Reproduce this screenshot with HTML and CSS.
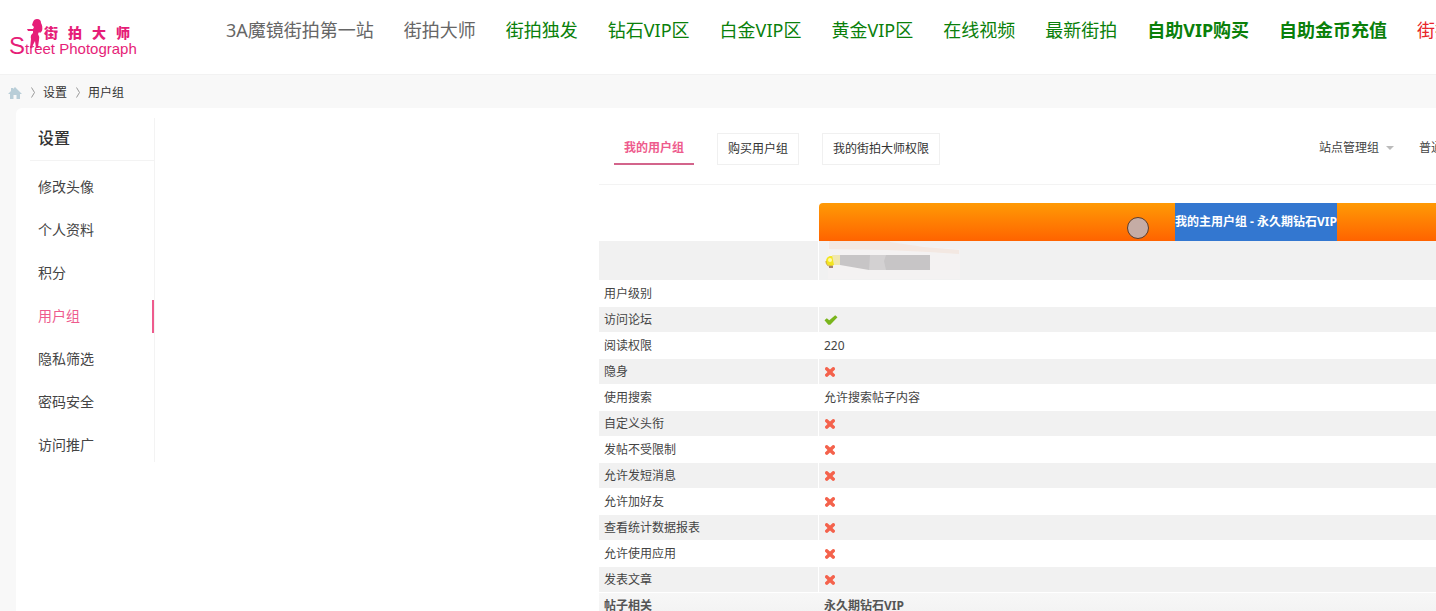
FILE: index.html
```html
<!DOCTYPE html>
<html lang="zh-CN">
<head>
<meta charset="utf-8">
<title>用户组 - 街拍大师</title>
<link rel="stylesheet" href="styles.css">
</head>
<body>
<svg class="defs" aria-hidden="true">
  <symbol id="cross" viewBox="0 0 12 12"><path d="M1 2.500Q1.500.8 3.500 1.200L6 3.500 8.500 1.200Q10.500.8 11 2.500V3.500L8.500 6 11 8.500V9.500Q10.500 11.200 8.500 10.800L6 8.500 3.500 10.800Q1.500 11.200 1 9.500V8.500L3.500 6 1 3.500Z" fill="#f4624c"/></symbol>
  <symbol id="check" viewBox="0 0 14 12"><path d="M.5 6.300 2.800 4.200 5.300 6.300 11.200 1.200 13.500 3.200 6.300 10.800 4.300 10.800Z" fill="#7ab51d"/></symbol>
</svg>
<header class="header">
  <a class="logo" href="#" aria-label="街拍大师 Street Photograph">
    <svg class="figure" viewBox="0 0 18 30" aria-hidden="true"><path d="M6 3Q7 0 10 0 14 0 14 4 16 7 15 12L13 14 12 13 11 15Q13 18 12 21L11 28 13 29 9 29 8 22 6 26 5 29 3 29 4 20Q3 16 6 14L6 12 1 12 0 10 6 10 7 8 5 6Z" fill="#e61e78"/></svg>
    <span class="logo-cn">街拍大师</span>
    <span class="logo-en"><span class="logo-s">S</span>treet Photograph</span>
  </a>
  <nav class="nav">
    <a href="#">3A魔镜街拍第一站</a>
    <a href="#">街拍大师</a>
    <a class="green" href="#">街拍独发</a>
    <a class="green" href="#">钻石VIP区</a>
    <a class="green" href="#">白金VIP区</a>
    <a class="green" href="#">黄金VIP区</a>
    <a class="green" href="#">在线视频</a>
    <a class="green" href="#">最新街拍</a>
    <a class="green strong" href="#">自助VIP购买</a>
    <a class="green strong" href="#">自助金币充值</a>
    <a class="red" href="#">街拍</a>
  </nav>
</header>
<nav class="crumbs" aria-label="面包屑">
  <a href="#" aria-label="首页"><svg class="home" viewBox="0 0 14 14"><path d="M7 1 14 8 12 8 12 13 8.500 13 8.500 9 5.500 9 5.500 13 2 13 2 8 0 8 3 5 3 2 5 2 5 3Z" fill="#b9ced8"/></svg></a>
  <svg class="arrow" viewBox="0 0 4 11"><path d="M.5.5 3.500 5.500.5 10.500" fill="none" stroke="#999"/></svg>
  <a href="#">设置</a>
  <svg class="arrow" viewBox="0 0 4 11"><path d="M.5.5 3.500 5.500.5 10.500" fill="none" stroke="#999"/></svg>
  <a href="#">用户组</a>
</nav>
<div class="panel">
  <aside class="side">
    <h2>设置</h2>
    <ul>
      <li><a href="#">修改头像</a></li>
      <li><a href="#">个人资料</a></li>
      <li><a href="#">积分</a></li>
      <li><a class="current" href="#">用户组</a></li>
      <li><a href="#">隐私筛选</a></li>
      <li><a href="#">密码安全</a></li>
      <li><a href="#">访问推广</a></li>
    </ul>
  </aside>
  <main class="main">
    <div class="tabs">
      <a class="tab active" href="#">我的用户组</a>
      <a class="tab" href="#">购买用户组</a>
      <a class="tab" href="#">我的街拍大师权限</a>
      <div class="groups">
        <button type="button">站点管理组<svg class="caret" viewBox="0 0 8 4"><path d="M0 0H8L4 4Z" fill="#bbb"/></svg></button>
        <button type="button">普通用户组</button>
      </div>
    </div>
    <table class="perms">
      <colgroup><col class="name"><col></colgroup>
      <thead>
        <tr><td></td><th scope="col"><div class="banner"><span class="marked">我的主用户组 - 永久期钻石VIP</span><i class="pointer"></i></div></th></tr>
      </thead>
      <tbody>
        <tr class="alt member"><td></td><td><svg class="masked" viewBox="0 0 144 42" aria-hidden="true">
          <path d="M9 0H71V5L141 10V40H9Z" fill="#f4f2f2"/>
          <path d="M10 0H71V3L105 8 140 11V15L110 13 68 11 10 10Z" fill="#f3e8e2"/>
          <circle cx="12" cy="22" r="5" fill="#f3e51e"/><path d="M7 22Q7 27 11 27H14" fill="none" stroke="#cda72a"/><path d="M10 27H14V29H10Z" fill="#a38470"/><circle cx="11" cy="21" r="2" fill="#fff9a5"/>
          <path d="M13 16H21V26H15Z" fill="#f0e7b1"/>
          <path d="M21 16H111V31H50L21 26Z" fill="#c7c5c6"/><path d="M51 16H67L65 22 67 31H50Z" fill="#d3d1d2"/>
        </svg></td></tr>
        <tr><th scope="row">用户级别</th><td></td></tr>
        <tr class="alt"><th scope="row">访问论坛</th><td><svg class="check" role="img" aria-label="是"><use href="#check"/></svg></td></tr>
        <tr><th scope="row">阅读权限</th><td>220</td></tr>
        <tr class="alt"><th scope="row">隐身</th><td><svg class="cross" role="img" aria-label="否"><use href="#cross"/></svg></td></tr>
        <tr><th scope="row">使用搜索</th><td>允许搜索帖子内容</td></tr>
        <tr class="alt"><th scope="row">自定义头衔</th><td><svg class="cross" role="img" aria-label="否"><use href="#cross"/></svg></td></tr>
        <tr><th scope="row">发帖不受限制</th><td><svg class="cross" role="img" aria-label="否"><use href="#cross"/></svg></td></tr>
        <tr class="alt"><th scope="row">允许发短消息</th><td><svg class="cross" role="img" aria-label="否"><use href="#cross"/></svg></td></tr>
        <tr><th scope="row">允许加好友</th><td><svg class="cross" role="img" aria-label="否"><use href="#cross"/></svg></td></tr>
        <tr class="alt"><th scope="row">查看统计数据报表</th><td><svg class="cross" role="img" aria-label="否"><use href="#cross"/></svg></td></tr>
        <tr><th scope="row">允许使用应用</th><td><svg class="cross" role="img" aria-label="否"><use href="#cross"/></svg></td></tr>
        <tr class="alt"><th scope="row">发表文章</th><td><svg class="cross" role="img" aria-label="否"><use href="#cross"/></svg></td></tr>
        <tr class="section"><th scope="row">帖子相关</th><td>永久期钻石VIP</td></tr>
      </tbody>
    </table>
  </main>
</div>
</body>
</html>
```
FILE: styles.css
```css
* { box-sizing: border-box; }
html { overflow: hidden; }
body {
  margin: 0;
  overflow: hidden;
  height: 100vh;
  background: #f8f8f8;
  color: #444;
  font: 12px/20px "Noto Sans", "Noto Sans CJK SC", sans-serif;
}
a { color: inherit; text-decoration: none; }
.defs { display: none; }

.header {
  display: flex;
  align-items: flex-start;
  height: 75px;
  background: #fff;
  border-bottom: 1px solid #f2f2f2;
}
.logo {
  position: relative;
  flex: none;
  width: 226px;
  padding: 24px 0 0 9px;
  color: #e61e78;
  font-family: "Liberation Sans", "Noto Sans CJK SC", sans-serif;
}
.figure { position: absolute; left: 27px; top: 19px; width: 18px; height: 30px; }
.logo-cn {
  display: block;
  padding-left: 35px;
  font-size: 14px;
  line-height: 18px;
  font-weight: 900;
  letter-spacing: 10px;
}
.logo-en { display: block; font-size: 15px; line-height: 8px; white-space: nowrap; }
.logo-s { font-size: 24px; }
.nav {
  display: flex;
  gap: 30px;
  padding-top: 15px;
  font-size: 18px;
  line-height: 30px;
  white-space: nowrap;
  color: #666;
}
.green { color: #0a800a; }
.strong { font-weight: 700; }
.red { color: #e8262a; }

.crumbs {
  display: flex;
  align-items: center;
  height: 33px;
  padding: 2px 8px 0;
  color: #333;
}
.home { display: block; width: 14px; height: 14px; }
.arrow { width: 4px; height: 11px; margin: 0 8px 0 9px; }

.panel {
  display: flex;
  align-items: flex-start;
  margin-left: 16px;
  padding: 10px 0 0 14px;
  min-height: 100vh;
  background: #fff;
  border-radius: 6px 0 0 0;
}
.side {
  flex: none;
  width: 125px;
  border-right: 1px solid #f3f3f3;
  font-size: 14px;
}
.side h2 {
  margin: 0;
  padding: 0 8px;
  height: 43px;
  border-bottom: 1px solid #f3f3f3;
  font-size: 16px;
  line-height: 40px;
  font-weight: 500;
  color: #333;
}
.side ul { list-style: none; margin: 0; padding: 10px 0 0; }
.side li { padding-bottom: 10px; }
.side li:last-child { padding-bottom: 0; }
.side a { display: block; height: 33px; padding: 0 8px; line-height: 31px; }
.side .current { color: #ee5b8d; border-right: 2px solid #ee5b8d; }

.main { flex: none; width: 1094px; margin-left: 444px; }
.tabs {
  display: flex;
  align-items: flex-start;
  padding: 15px 0 19px 15px;
  margin-bottom: 18px;
  border-bottom: 1px solid #f3f3f3;
  white-space: nowrap;
}
.tab {
  height: 32px;
  margin-right: 23px;
  padding: 0 10px;
  border: 1px solid #f0f0f0;
  line-height: 29px;
  color: #333;
}
.tab.active {
  border: 0;
  border-bottom: 2px solid #d3648b;
  color: #ee5b8d;
  font-weight: 700;
}
.groups { display: flex; gap: 25px; margin-left: 356px; }
.groups button {
  padding: 0;
  border: 0;
  background: none;
  font: inherit;
  line-height: 29px;
  color: #444;
  white-space: nowrap;
}
.caret { width: 8px; height: 4px; margin-left: 7px; vertical-align: 2px; }

.perms {
  width: 100%;
  table-layout: fixed;
  border-collapse: separate;
  border-spacing: 0;
}
.name { width: 220px; }
.perms thead td, .perms thead th { padding: 0; }
.banner {
  position: relative;
  display: flex;
  justify-content: center;
  height: 38px;
  border-radius: 4px 4px 0 0;
  background: linear-gradient(#ff9a05, #ff6300);
  color: #fff;
  line-height: 38px;
}
.marked { background: #3377d0; }
.pointer {
  position: absolute;
  left: 308px;
  top: 14px;
  width: 22px;
  height: 22px;
  border: 1px solid #5a3c2c;
  border-radius: 50%;
  background: #c5aca5;
}
.perms tbody th, .perms tbody td {
  height: 26px;
  padding: 0 5px;
  border-bottom: 1px solid #fff;
  text-align: left;
  font-weight: 400;
  line-height: 24px;
}
.perms .alt > * { background: #f1f1f1; }
.perms .alt > :first-child { border-right: 1px solid #fff; }
.perms tbody .member > td { height: 40px; padding: 0; vertical-align: top; }
.masked { display: block; width: 144px; height: 42px; margin: -2px 0; }
.perms tbody .section > * { background: linear-gradient(#f7f7f7, #f2f2f2); font-weight: 700; color: #555; }
.cross { display: block; width: 12px; height: 12px; }
.check { display: block; width: 14px; height: 12px; }
```
